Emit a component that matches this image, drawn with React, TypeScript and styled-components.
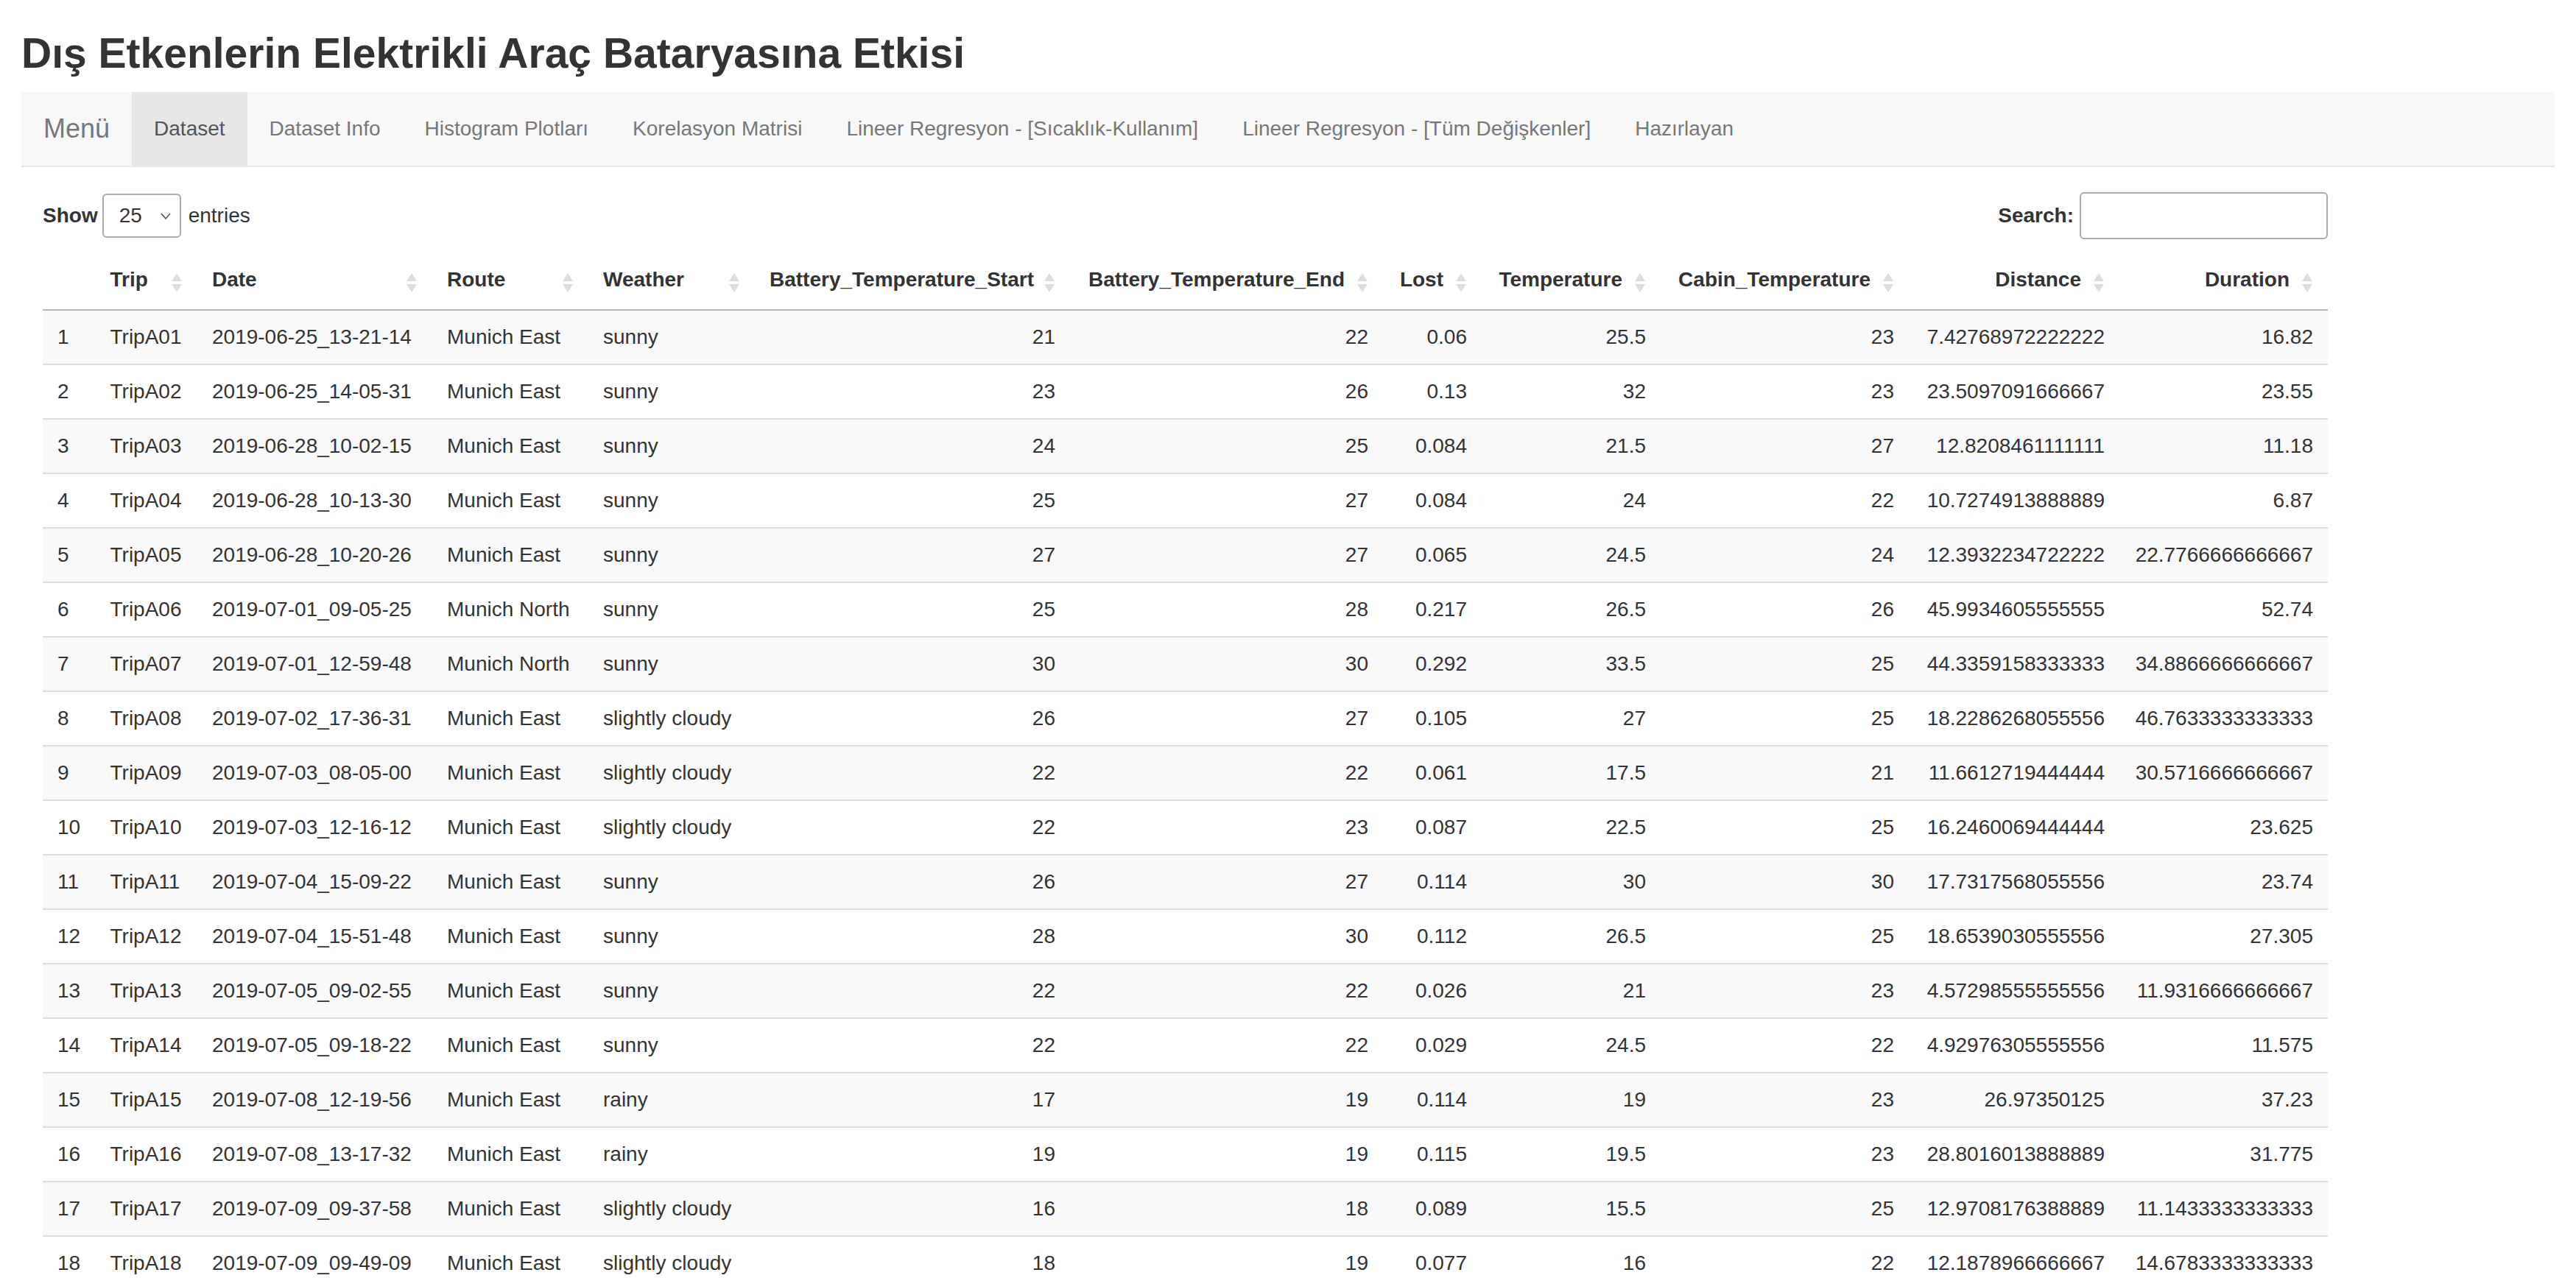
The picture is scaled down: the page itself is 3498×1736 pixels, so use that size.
import React from 'react';
import styled, { createGlobalStyle } from 'styled-components';

const GlobalStyle = createGlobalStyle`
  html, body {
    margin: 0;
    padding: 0;
    background: #ffffff;
  }
  body {
    font-family: "Liberation Sans", Arial, sans-serif;
    font-size: 28px;
    line-height: 40px;
    color: #333333;
  }
  * {
    box-sizing: border-box;
  }
`;

const Page = styled.div`
  padding: 0 29px;
  height: 1736px;
  overflow: hidden;
`;

const Title = styled.h2`
  margin: 39px 0 20px;
  font-size: 57px;
  line-height: 66px;
  font-weight: 700;
  color: #333333;
`;

const Navbar = styled.nav`
  display: flex;
  align-items: stretch;
  height: 102px;
  background: #f8f8f8;
  border-bottom: 2px solid #e7e7e7;
  margin-bottom: 36px;
`;

const Brand = styled.div`
  padding: 30px 30px;
  font-size: 36px;
  line-height: 40px;
  color: #777777;
`;

const NavItem = styled.a<{ $active?: boolean }>`
  display: block;
  padding: 30px 30px;
  line-height: 40px;
  font-size: 28px;
  color: ${(p) => (p.$active ? '#555555' : '#777777')};
  background: ${(p) => (p.$active ? '#e7e7e7' : 'transparent')};
  text-decoration: none;
  white-space: nowrap;
`;

const TabContent = styled.div`
  padding: 0 29px;
`;

const Wrapper = styled.div`
  width: fit-content;
`;

const Controls = styled.div`
  display: flex;
  justify-content: space-between;
  align-items: center;
  height: 60px;
  margin-bottom: 25px;
`;

const ControlLabel = styled.label`
  display: flex;
  align-items: center;
  font-weight: 700;
  white-space: nowrap;
`;

const PlainText = styled.span`
  font-weight: 400;
`;

const SelectBox = styled.div`
  display: flex;
  align-items: center;
  justify-content: space-between;
  width: 107px;
  height: 60px;
  margin: 0 10px 0 6px;
  padding: 0 12px 0 21px;
  border: 2px solid #aaaaaa;
  border-radius: 6px;
  font-weight: 400;
  color: #333333;
  background: #ffffff;
`;

const SearchInput = styled.input`
  width: 337px;
  height: 64px;
  margin-left: 8px;
  border: 2px solid #aaaaaa;
  border-radius: 6px;
  font-size: 28px;
  background: #ffffff;
  outline: none;
`;

const Table = styled.table`
  border-collapse: collapse;
  table-layout: fixed;
  width: 3103px;
`;

const HeadCell = styled.th<{ $right?: boolean; $sortable?: boolean }>`
  position: relative;
  padding: 12px ${(p) => (p.$sortable ? '52px' : '20px')} 20px 20px;
  line-height: 40px;
  font-weight: 700;
  text-align: ${(p) => (p.$right ? 'right' : 'left')};
  border-bottom: 2px solid #b3b3b3;
  white-space: nowrap;
`;

const SortIcon = styled.span`
  position: absolute;
  right: 21px;
  top: 50%;
  transform: translateY(-50%);
  display: flex;
  flex-direction: column;
  gap: 4px;
`;

const Row = styled.tr<{ $striped: boolean }>`
  background: ${(p) => (p.$striped ? '#f9f9f9' : '#ffffff')};
`;

const Cell = styled.td<{ $right?: boolean }>`
  padding: 16px 20px;
  line-height: 40px;
  text-align: ${(p) => (p.$right ? 'right' : 'left')};
  border-top: 2px solid #dddddd;
  white-space: nowrap;
  overflow: hidden;
`;

const tabs = [
  'Dataset',
  'Dataset Info',
  'Histogram Plotları',
  'Korelasyon Matrisi',
  'Lineer Regresyon - [Sıcaklık-Kullanım]',
  'Lineer Regresyon - [Tüm Değişkenler]',
  'Hazırlayan',
];

const columns = [
  { name: '', width: 71.5, right: false, sortable: false },
  { name: 'Trip', width: 138.5, right: false, sortable: true },
  { name: 'Date', width: 319, right: false, sortable: true },
  { name: 'Route', width: 212, right: false, sortable: true },
  { name: 'Weather', width: 226, right: false, sortable: true },
  { name: 'Battery_Temperature_Start', width: 428, right: true, sortable: true },
  { name: 'Battery_Temperature_End', width: 425, right: true, sortable: true },
  { name: 'Lost', width: 134, right: true, sortable: true },
  { name: 'Temperature', width: 243, right: true, sortable: true },
  { name: 'Cabin_Temperature', width: 337, right: true, sortable: true },
  { name: 'Distance', width: 286, right: true, sortable: true },
  { name: 'Duration', width: 283, right: true, sortable: true },
];

const rows: string[][] = [
  ['TripA01', '2019-06-25_13-21-14', 'Munich East', 'sunny', '21', '22', '0.06', '25.5', '23', '7.42768972222222', '16.82'],
  ['TripA02', '2019-06-25_14-05-31', 'Munich East', 'sunny', '23', '26', '0.13', '32', '23', '23.5097091666667', '23.55'],
  ['TripA03', '2019-06-28_10-02-15', 'Munich East', 'sunny', '24', '25', '0.084', '21.5', '27', '12.8208461111111', '11.18'],
  ['TripA04', '2019-06-28_10-13-30', 'Munich East', 'sunny', '25', '27', '0.084', '24', '22', '10.7274913888889', '6.87'],
  ['TripA05', '2019-06-28_10-20-26', 'Munich East', 'sunny', '27', '27', '0.065', '24.5', '24', '12.3932234722222', '22.7766666666667'],
  ['TripA06', '2019-07-01_09-05-25', 'Munich North', 'sunny', '25', '28', '0.217', '26.5', '26', '45.9934605555555', '52.74'],
  ['TripA07', '2019-07-01_12-59-48', 'Munich North', 'sunny', '30', '30', '0.292', '33.5', '25', '44.3359158333333', '34.8866666666667'],
  ['TripA08', '2019-07-02_17-36-31', 'Munich East', 'slightly cloudy', '26', '27', '0.105', '27', '25', '18.2286268055556', '46.7633333333333'],
  ['TripA09', '2019-07-03_08-05-00', 'Munich East', 'slightly cloudy', '22', '22', '0.061', '17.5', '21', '11.6612719444444', '30.5716666666667'],
  ['TripA10', '2019-07-03_12-16-12', 'Munich East', 'slightly cloudy', '22', '23', '0.087', '22.5', '25', '16.2460069444444', '23.625'],
  ['TripA11', '2019-07-04_15-09-22', 'Munich East', 'sunny', '26', '27', '0.114', '30', '30', '17.7317568055556', '23.74'],
  ['TripA12', '2019-07-04_15-51-48', 'Munich East', 'sunny', '28', '30', '0.112', '26.5', '25', '18.6539030555556', '27.305'],
  ['TripA13', '2019-07-05_09-02-55', 'Munich East', 'sunny', '22', '22', '0.026', '21', '23', '4.57298555555556', '11.9316666666667'],
  ['TripA14', '2019-07-05_09-18-22', 'Munich East', 'sunny', '22', '22', '0.029', '24.5', '22', '4.92976305555556', '11.575'],
  ['TripA15', '2019-07-08_12-19-56', 'Munich East', 'rainy', '17', '19', '0.114', '19', '23', '26.97350125', '37.23'],
  ['TripA16', '2019-07-08_13-17-32', 'Munich East', 'rainy', '19', '19', '0.115', '19.5', '23', '28.8016013888889', '31.775'],
  ['TripA17', '2019-07-09_09-37-58', 'Munich East', 'slightly cloudy', '16', '18', '0.089', '15.5', '25', '12.9708176388889', '11.1433333333333'],
  ['TripA18', '2019-07-09_09-49-09', 'Munich East', 'slightly cloudy', '18', '19', '0.077', '16', '22', '12.1878966666667', '14.6783333333333'],
];

const Sorter = () => (
  <SortIcon>
    <svg width="14" height="11" viewBox="0 0 14 11">
      <polygon points="7,0 14,11 0,11" fill="#dddddd" />
    </svg>
    <svg width="14" height="11" viewBox="0 0 14 11">
      <polygon points="0,0 14,0 7,11" fill="#dddddd" />
    </svg>
  </SortIcon>
);

const Chevron = () => (
  <svg width="14" height="9" viewBox="0 0 14 9">
    <polyline points="1,1 7,8 13,1" fill="none" stroke="#555555" strokeWidth="1.6" />
  </svg>
);

export default function App() {
  return (
    <>
      <GlobalStyle />
      <Page>
        <Title>Dış Etkenlerin Elektrikli Araç Bataryasına Etkisi</Title>
        <Navbar>
          <Brand>Menü</Brand>
          {tabs.map((t, i) => (
            <NavItem key={t} $active={i === 0}>
              {t}
            </NavItem>
          ))}
        </Navbar>
        <TabContent>
          <Wrapper>
            <Controls>
              <ControlLabel>
                Show
                <SelectBox>
                  <span>25</span>
                  <Chevron />
                </SelectBox>
                <PlainText>entries</PlainText>
              </ControlLabel>
              <ControlLabel>
                Search:
                <SearchInput type="search" />
              </ControlLabel>
            </Controls>
            <Table>
              <colgroup>
                {columns.map((c, i) => (
                  <col key={i} style={{ width: c.width }} />
                ))}
              </colgroup>
              <thead>
                <tr>
                  {columns.map((c, i) => (
                    <HeadCell key={i} $right={c.right} $sortable={c.sortable}>
                      {c.name}
                      {c.sortable && <Sorter />}
                    </HeadCell>
                  ))}
                </tr>
              </thead>
              <tbody>
                {rows.map((r, i) => (
                  <Row key={i} $striped={i % 2 === 0}>
                    <Cell>{i + 1}</Cell>
                    {r.map((v, j) => (
                      <Cell key={j} $right={columns[j + 1].right}>
                        {v}
                      </Cell>
                    ))}
                  </Row>
                ))}
              </tbody>
            </Table>
          </Wrapper>
        </TabContent>
      </Page>
    </>
  );
}
